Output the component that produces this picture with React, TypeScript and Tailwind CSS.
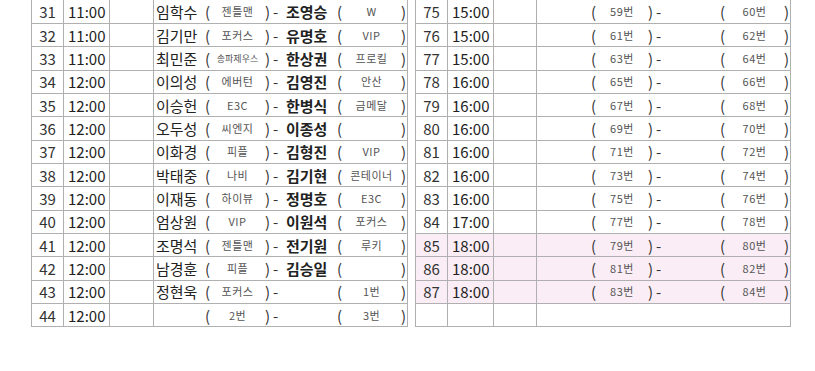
type Row = [number, string, string, string, string, string];

const leftRows: Row[] = [
  [31, "11:00", "임학수", "젠틀맨", "조영승", "W"],
  [32, "11:00", "김기만", "포커스", "유명호", "VIP"],
  [33, "11:00", "최민준", "송파제우스", "한상권", "프로킬"],
  [34, "12:00", "이의성", "에버턴", "김영진", "안산"],
  [35, "12:00", "이승헌", "E3C", "한병식", "금메달"],
  [36, "12:00", "오두성", "씨엔지", "이종성", ""],
  [37, "12:00", "이화경", "피플", "김형진", "VIP"],
  [38, "12:00", "박태중", "나비", "김기현", "콘테이너"],
  [39, "12:00", "이재동", "하이뷰", "정명호", "E3C"],
  [40, "12:00", "엄상원", "VIP", "이원석", "포커스"],
  [41, "12:00", "조명석", "젠틀맨", "전기원", "루키"],
  [42, "12:00", "남경훈", "피플", "김승일", ""],
  [43, "12:00", "정현욱", "포커스", "", "1번"],
  [44, "12:00", "", "2번", "", "3번"],
];

const rightTimes = ["15:00", "15:00", "15:00", "16:00", "16:00", "16:00", "16:00", "16:00", "16:00", "17:00", "18:00", "18:00", "18:00"];

const rightRows: Row[] = rightTimes.map((t, i) => [75 + i, t, "", `${59 + i * 2}번`, "", `${60 + i * 2}번`]);

function Team({ t, w }: { t: string; w: string }) {
  const small = t.length >= 5;
  return (
    <span className={`flex ${w} items-center justify-between text-[15px] text-[#333]`}>
      <span>(</span>
      <span className={small ? "text-[9px] text-[#555]" : "text-[11px] tracking-[0.5px] text-[#555]"}>{t}</span>
      <span>)</span>
    </span>
  );
}

function Match({ row, wide }: { row: Row; wide?: boolean }) {
  return (
    <div className="flex h-full items-center pl-[2px] whitespace-nowrap">
      <span className={`${wide ? "w-[52px]" : "w-[49px]"} text-[15px] text-[#222]`}>{row[2]}</span>
      <Team t={row[3]} w={wide ? "w-[62px]" : "w-[65px]"} />
      <span className="w-[16px] pl-[3px] text-[15px] text-[#333]">-</span>
      <span className="w-[51px] text-[15px] font-bold text-[#222]">{row[4]}</span>
      <Team t={row[5]} w="w-[69px]" />
    </div>
  );
}

function Table({ rows, pink, fill, emptyW, wide }: { rows: Row[]; pink?: number[]; fill: number; emptyW: string; wide?: boolean }) {
  const all: (Row | null)[] = [...rows];
  while (all.length < fill) all.push(null);
  return (
    <div className="flex flex-col border-l border-[#b0b0b0]">
      {all.map((r, i) => (
        <div
          key={i}
          className={`flex ${i === 0 ? "h-[24px]" : "h-[23.33px]"} ${r && pink?.includes(r[0]) ? "bg-[#faedf5]" : "bg-white"}`}
        >
          <div className="flex w-[32px] items-center justify-center border-r border-b border-[#b0b0b0] text-[15px] text-[#333]">
            {r ? r[0] : ""}
          </div>
          <div className="flex w-[46px] items-center border-r border-b border-[#b0b0b0] pl-[4px] text-[15px] text-[#222]">
            {r ? r[1] : ""}
          </div>
          <div className={`${emptyW} border-r border-b border-[#b0b0b0]`} />
          <div className="w-[254px] border-r border-b border-[#b0b0b0]">{r && <Match row={r} wide={wide} />}</div>
        </div>
      ))}
    </div>
  );
}

export default function App() {
  return (
    <div className="h-[371px] w-[815px] overflow-hidden bg-white pl-[31px] font-['Noto_Sans_CJK_KR',sans-serif] leading-none">
      <div className="flex gap-[7px]">
        <Table rows={leftRows} fill={14} emptyW="w-[44px]" />
        <Table rows={rightRows} fill={14} emptyW="w-[43px]" pink={[85, 86, 87]} wide />
      </div>
    </div>
  );
}
